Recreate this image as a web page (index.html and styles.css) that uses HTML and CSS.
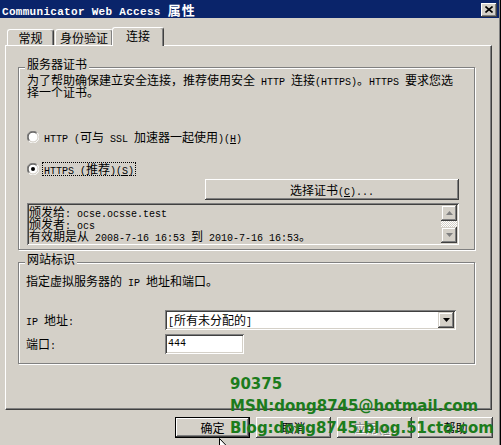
FILE: index.html
```html
<!DOCTYPE html>
<html lang="zh-CN">
<head>
    <meta charset="UTF-8">
    <title>Communicator Web Access 属性</title>
    <link rel="stylesheet" href="styles.css">
</head>
<body>
    <div class="window">
        <!-- 标题栏 -->
        <div class="titlebar">
            <span class="title">Communicator Web Access <span class="title-cjk">属性</span></span>
            <span class="close-btn">
                <svg width="8" height="7" viewBox="0 0 8 7"><path d="M0.5 0.5 L7.5 6.5 M7.5 0.5 L0.5 6.5" stroke="#000" stroke-width="1.6"/></svg>
            </span>
        </div>

        <!-- 选项卡 -->
        <div class="tabs">
            <div class="tab tab-general">常规</div>
            <div class="tab tab-auth">身份验证</div>
            <div class="tab active">连接</div>
        </div>

        <div class="panel">
            <!-- 服务器证书 -->
            <div class="group cert-group">
                <div class="group-title">服务器证书</div>
                <p class="desc">为了帮助确保建立安全连接，推荐使用安全<span class="en"> HTTP </span>连接<span class="en">(HTTPS)</span>。<span class="en">HTTPS </span>要求您选<br>择一个证书。</p>

                <div class="radio">
                    <svg width="12" height="12" viewBox="0 0 12 12">
                        <circle cx="6" cy="6" r="5" fill="#fff"/>
                        <path d="M10.2 1.8 A5.9 5.9 0 0 0 1.8 10.2" stroke="#808080" fill="none"/>
                        <path d="M9.5 2.5 A4.9 4.9 0 0 0 2.5 9.5" stroke="#404040" fill="none"/>
                        <path d="M1.8 10.2 A5.9 5.9 0 0 0 10.2 1.8" stroke="#fff" fill="none"/>
                        <path d="M2.5 9.5 A4.9 4.9 0 0 0 9.5 2.5" stroke="#d4d0c8" fill="none"/>
                    </svg>
                    <span><span class="en">HTTP (</span>可与<span class="en"> SSL </span>加速器一起使用<span class="en">)(<u>H</u>)</span></span>
                </div>
                <div class="radio">
                    <svg width="12" height="12" viewBox="0 0 12 12">
                        <circle cx="6" cy="6" r="5" fill="#fff"/>
                        <path d="M10.2 1.8 A5.9 5.9 0 0 0 1.8 10.2" stroke="#808080" fill="none"/>
                        <path d="M9.5 2.5 A4.9 4.9 0 0 0 2.5 9.5" stroke="#404040" fill="none"/>
                        <path d="M1.8 10.2 A5.9 5.9 0 0 0 10.2 1.8" stroke="#fff" fill="none"/>
                        <path d="M2.5 9.5 A4.9 4.9 0 0 0 9.5 2.5" stroke="#d4d0c8" fill="none"/>
                        <circle cx="6" cy="6" r="2" fill="#000"/>
                    </svg>
                    <span class="focus"><span class="en">HTTPS (</span>推荐<span class="en">)(<u>S</u>)</span></span>
                </div>

                <button class="btn cert-btn">选择证书<span class="en">(<u>C</u>)...</span></button>

                <div class="cert-info">
                    <div class="cert-text">
                        颁发给<span class="en">: ocse.ocsse.test</span><br>
                        颁发者<span class="en">: ocs</span><br>
                        有效期是从<span class="en"> 2008-7-16 16:53 </span>到<span class="en"> 2010-7-16 16:53</span>。
                    </div>
                    <div class="scrollbar">
                        <div class="scroll-btn">
                            <svg width="7" height="4" viewBox="0 0 7 4"><polygon points="3.5,0 7,4 0,4" fill="#808080"/></svg>
                        </div>
                        <div class="scroll-track"></div>
                        <div class="scroll-btn">
                            <svg width="7" height="4" viewBox="0 0 7 4"><polygon points="0,0 7,0 3.5,4" fill="#808080"/></svg>
                        </div>
                    </div>
                </div>
            </div>

            <!-- 网站标识 -->
            <div class="group site-group">
                <div class="group-title">网站标识</div>
                <p class="desc">指定虚拟服务器的<span class="en"> IP </span>地址和端口。</p>

                <div class="field-row ip-row">
                    <span class="field-label"><span class="en">IP </span>地址<span class="en">:</span></span>
                    <div class="combo">
                        <span class="combo-text"><span class="en">[</span>所有未分配的<span class="en">]</span></span>
                        <span class="combo-btn">
                            <svg width="7" height="4" viewBox="0 0 7 4"><polygon points="0,0 7,0 3.5,4" fill="#000"/></svg>
                        </span>
                    </div>
                </div>
                <div class="field-row">
                    <span class="field-label">端口<span class="en">:</span></span>
                    <div class="text-input"><span class="en">444</span></div>
                </div>
            </div>
        </div>

        <!-- 底部按钮 -->
        <div class="buttons">
            <button class="btn default">确定</button>
            <button class="btn">取消</button>
            <button class="btn disabled">应用<span class="en">(<u>A</u>)</span></button>
            <button class="btn">帮助</button>
        </div>

        <!-- 水印 -->
        <div class="watermark">
            90375<br>
            MSN:dong8745@hotmail.com<br>
            Blog:dong8745.blog.51cto.com
        </div>

        <svg class="cursor" width="12" height="19" viewBox="0 0 12 19">
            <path d="M0.5 0.5 L0.5 16 L4 12.5 L6.5 18 L8.5 17 L6 11.5 L11 11.5 Z" fill="#fff" stroke="#000"/>
        </svg>
    </div>
</body>
</html>
```

FILE: styles.css
```css
* {
    box-sizing: border-box;
}
body {
    margin: 0;
    background: #d4d0c8;
    color: #000;
    font: 12px/12px "Noto Sans CJK SC", sans-serif;
}
.en {
    font-family: "Liberation Mono", monospace;
    font-size: 10px;
    line-height: 0;
}
.window {
    position: relative;
    width: 501px;
    height: 445px;
    overflow: hidden;
    padding-right: 2px;
    background: #d4d0c8;
    box-shadow: inset -1px 0 #000, inset -2px 0 #808080;
}

/* 标题栏 */
.titlebar {
    height: 18px;
    background: #0a246a;
    color: #fff;
    display: flex;
    align-items: center;
    justify-content: space-between;
    padding: 0 2px 0 2px;
}
.title {
    font: bold 11px "Liberation Mono", monospace;
    letter-spacing: 0.3px;
    white-space: nowrap;
}
.title-cjk {
    font: bold 13px "Noto Sans CJK SC", sans-serif;
    letter-spacing: 1px;
}
.close-btn {
    width: 16px;
    height: 14px;
    margin-top: 1px;
    background: #d4d0c8;
    display: flex;
    align-items: center;
    justify-content: center;
    box-shadow: inset -1px -1px #404040, inset 1px 1px #fff, inset -2px -2px #808080;
}

/* 选项卡 */
.tabs {
    display: flex;
    align-items: flex-end;
    height: 18px;
    margin-top: 9px;
    padding-left: 7px;
}
.tab {
    height: 16px;
    border: 1px solid;
    border-bottom: none;
    border-color: #fff #404040 #fff #fff;
    border-radius: 3px 3px 0 0;
    box-shadow: inset -1px 0 #808080;
    background: #d4d0c8;
    text-align: center;
    line-height: 15px;
}
.tab-general {
    width: 47px;
}
.tab-auth {
    width: 58px;
    margin-left: 1px;
}
.tab.active {
    position: relative;
    z-index: 1;
    width: 52px;
    height: 19px;
    margin-left: -1px;
    margin-bottom: -1px;
    line-height: 16px;
}

/* 面板 */
.panel {
    margin-left: 5px;
    width: 487px;
    height: 365px;
    border: 1px solid;
    border-color: #fff #404040 #404040 #fff;
    box-shadow: inset -1px -1px #808080;
    padding: 21px 0 0 12px;
}
.group {
    position: relative;
    width: 457px;
    border: 1px solid #808080;
    box-shadow: inset 1px 1px #fff, 1px 1px #fff;
}
.group-title {
    position: absolute;
    top: -11px;
    left: 6px;
    padding: 0 2px;
    background: #d4d0c8;
    line-height: 14px;
}
.desc {
    margin: 0;
    line-height: 12px;
    white-space: nowrap;
}
.cert-group {
    height: 183px;
    padding: 6px 0 0 8px;
}
.radio {
    display: flex;
    align-items: center;
    gap: 5px;
    height: 13px;
    margin-top: 32px;
    white-space: nowrap;
}
.radio + .radio {
    margin-top: 19px;
}
.radio svg {
    flex-shrink: 0;
}
.focus {
    outline: 1px dotted #000;
    outline-offset: 0;
    margin-left: -1px;
    padding: 0 1px;
}

/* 按钮 */
.btn {
    width: 75px;
    height: 21px;
    padding: 0;
    border: none;
    background: #d4d0c8;
    font: 12px/12px "Noto Sans CJK SC", sans-serif;
    color: #000;
    box-shadow: inset -1px -1px #404040, inset 1px 1px #fff, inset -2px -2px #808080, inset 2px 2px #d4d0c8;
}
.btn.default {
    border: 1px solid #000;
}
.btn.disabled {
    color: #808080;
    text-shadow: 1px 1px #fff;
}
.cert-btn {
    display: block;
    width: 254px;
    margin: 4px 0 0 178px;
}

/* 证书信息 */
.cert-info {
    display: flex;
    width: 432px;
    height: 42px;
    margin-top: 3px;
    box-shadow: inset 1px 1px #808080, inset -1px -1px #fff, inset 2px 2px #404040, inset -2px -2px #d4d0c8;
}
.cert-text {
    padding: 3px 0 0 2px;
    line-height: 12px;
    white-space: nowrap;
}
.scrollbar {
    display: flex;
    flex-direction: column;
    width: 16px;
    margin: 2px 2px 2px auto;
}
.scroll-btn {
    height: 16px;
    display: flex;
    align-items: center;
    justify-content: center;
    box-shadow: inset -1px -1px #404040, inset 1px 1px #d4d0c8, inset -2px -2px #808080, inset 2px 2px #fff;
}
.scroll-track {
    flex: 1;
    background: repeating-conic-gradient(#fff 0 25%, #d4d0c8 0 50%) 0 0 / 2px 2px;
}

/* 网站标识 */
.site-group {
    height: 102px;
    margin-top: 12px;
    padding: 12px 0 0 7px;
}
.field-row {
    display: flex;
    align-items: center;
    height: 20px;
    margin-top: 4px;
    white-space: nowrap;
}
.ip-row {
    margin-top: 23px;
}
.field-label {
    width: 139px;
}
.combo, .text-input {
    height: 20px;
    background: #fff;
    display: flex;
    align-items: center;
    padding-left: 3px;
    box-shadow: inset 1px 1px #808080, inset -1px -1px #fff, inset 2px 2px #404040, inset -2px -2px #d4d0c8;
}
.combo {
    width: 291px;
    justify-content: space-between;
    padding-right: 2px;
}
.combo-btn {
    width: 16px;
    height: 16px;
    background: #d4d0c8;
    display: flex;
    align-items: center;
    justify-content: center;
    box-shadow: inset -1px -1px #404040, inset 1px 1px #d4d0c8, inset -2px -2px #808080, inset 2px 2px #fff;
}
.text-input {
    width: 79px;
}

/* 底部 */
.buttons {
    display: flex;
    justify-content: flex-end;
    gap: 6px;
    margin-top: 7px;
    padding-right: 6px;
}
.watermark {
    position: absolute;
    left: 230px;
    top: 373px;
    z-index: 2;
    font: bold 15px/22px "DejaVu Sans", sans-serif;
    color: #1c7c1c;
    white-space: nowrap;
}
.cursor {
    position: absolute;
    left: 219px;
    top: 438px;
    z-index: 3;
}
```
